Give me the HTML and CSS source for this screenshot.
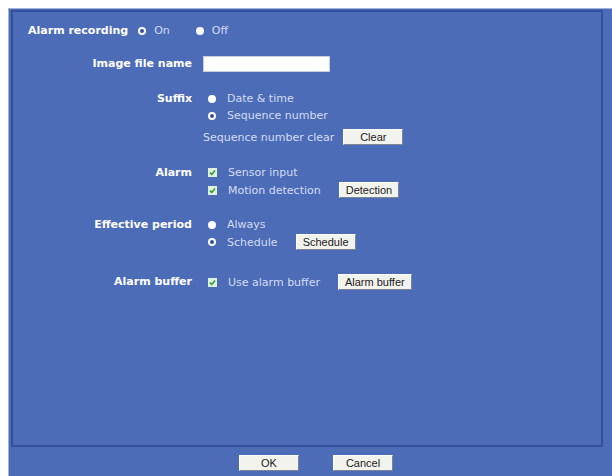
FILE: index.html
```html
<!DOCTYPE html>
<html lang="en">
<head>
	<meta charset="UTF-8">
	<title>Alarm recording</title>
	<link rel="stylesheet" href="styles.css">
</head>
<body>
	<div id="panel">
		<div id="setting">
			<div class="head">
				<span class="title">Alarm recording</span>
				<span class="radio ring"></span><span class="opt-text">On</span>
				<span class="radio dot off"></span><span class="opt-text">Off</span>
			</div>

			<div class="row name">
				<div class="label">Image file name</div>
				<div class="field"><input type="text" class="text"></div>
			</div>

			<div class="row suffix">
				<div class="label">Suffix</div>
				<div class="field">
					<div class="opt"><span class="radio dot"></span>Date &amp; time</div>
					<div class="opt"><span class="radio ring"></span>Sequence number</div>
					<div class="opt tall plain">Sequence number clear<button class="btn clear">Clear</button></div>
				</div>
			</div>

			<div class="row alarm">
				<div class="label">Alarm</div>
				<div class="field">
					<div class="opt"><span class="check"><svg width="9" height="9" viewBox="0 0 9 9"><rect width="9" height="9" fill="#dff0da"/><path d="M2 4.6 L3.8 6.4 L7 2.6" fill="none" stroke="#2f9a3c" stroke-width="1.6"/></svg></span>Sensor input</div>
					<div class="opt tall"><span class="check"><svg width="9" height="9" viewBox="0 0 9 9"><rect width="9" height="9" fill="#dff0da"/><path d="M2 4.6 L3.8 6.4 L7 2.6" fill="none" stroke="#2f9a3c" stroke-width="1.6"/></svg></span>Motion detection<button class="btn">Detection</button></div>
				</div>
			</div>

			<div class="row period">
				<div class="label">Effective period</div>
				<div class="field">
					<div class="opt"><span class="radio dot"></span>Always</div>
					<div class="opt tall"><span class="radio ring"></span>Schedule<button class="btn">Schedule</button></div>
				</div>
			</div>

			<div class="row buffer">
				<div class="label">Alarm buffer</div>
				<div class="field">
					<div class="opt tall"><span class="check"><svg width="9" height="9" viewBox="0 0 9 9"><rect width="9" height="9" fill="#dff0da"/><path d="M2 4.6 L3.8 6.4 L7 2.6" fill="none" stroke="#2f9a3c" stroke-width="1.6"/></svg></span>Use alarm buffer<button class="btn">Alarm buffer</button></div>
				</div>
			</div>
		</div>

		<div id="footer">
			<button class="btn">OK</button>
			<button class="btn">Cancel</button>
		</div>
	</div>
</body>
</html>
```

FILE: styles.css
```css
html, body {
	height: 100%;
	overflow: hidden;
}
body {
	margin: 8px 0 0 8px;
	background: #fff;
	font-size: 11px;
	font-family: "DejaVu Sans", Verdana, sans-serif;
}
#panel {
	box-sizing: border-box;
	width: 604px;
	height: 468px;
	padding: 1px 9px 0 2px;
	background: #4c6cb8;
	border-top: 1px solid #a4b2da;
	border-left: 1px solid #a4b2da;
}
#setting {
	box-sizing: border-box;
	height: 437px;
	padding: 10px 0 0 15px;
	border: 2px solid #34509c;
	color: #d4dcf2;
}
.head {
	display: flex;
	align-items: center;
	height: 17px;
}
.title,
.label {
	color: #fff;
	font-weight: bold;
}
.head .title {
	margin-right: 10px;
}
.head .opt-text {
	margin: 0 26px 0 8px;
}
.row {
	display: flex;
}
.label {
	width: 164px;
	margin-right: 11px;
	line-height: 17px;
	text-align: right;
}
.field {
	display: flex;
	flex-direction: column;
}
.opt {
	display: flex;
	align-items: center;
	height: 17px;
}
.opt.tall {
	height: 18px;
}
.opt.plain {
	margin-top: 4px;
}
.radio {
	display: inline-block;
	box-sizing: border-box;
	width: 8px;
	height: 8px;
	border-radius: 50%;
	background: #fff;
}
.radio.ring {
	border: 2.5px solid #fff;
	background: #34509c;
}
.opt .radio,
.opt .check {
	margin: 0 11px 0 5px;
}
.check {
	display: inline-flex;
}
.btn {
	box-sizing: border-box;
	min-width: 60px;
	height: 16px;
	margin-left: 18px;
	padding: 0 6px;
	background: #f3f3ee;
	border: 1px solid #fff;
	border-right-color: #7d8496;
	border-bottom-color: #7d8496;
	color: #1a1a1a;
	font-size: 11px;
	font-family: "Liberation Sans", Arial, sans-serif;
	line-height: 14px;
}
.btn.clear {
	margin-left: 9px;
}
.text {
	box-sizing: border-box;
	width: 127px;
	height: 16px;
	margin: 1px 0;
	padding: 0;
	background: #fff;
	border: 1px solid #c8cfe0;
}
.row.name {
	margin-top: 16px;
	line-height: 18px;
}
.row.name .label {
	line-height: 18px;
}
.row.suffix {
	margin-top: 17px;
}
.row.alarm {
	margin-top: 18px;
}
.row.period {
	margin-top: 17px;
}
.row.buffer {
	margin-top: 22px;
}
.row.buffer .label {
	line-height: 18px;
}
#footer {
	display: flex;
	justify-content: center;
	gap: 16px;
	padding-top: 8px;
}
```
